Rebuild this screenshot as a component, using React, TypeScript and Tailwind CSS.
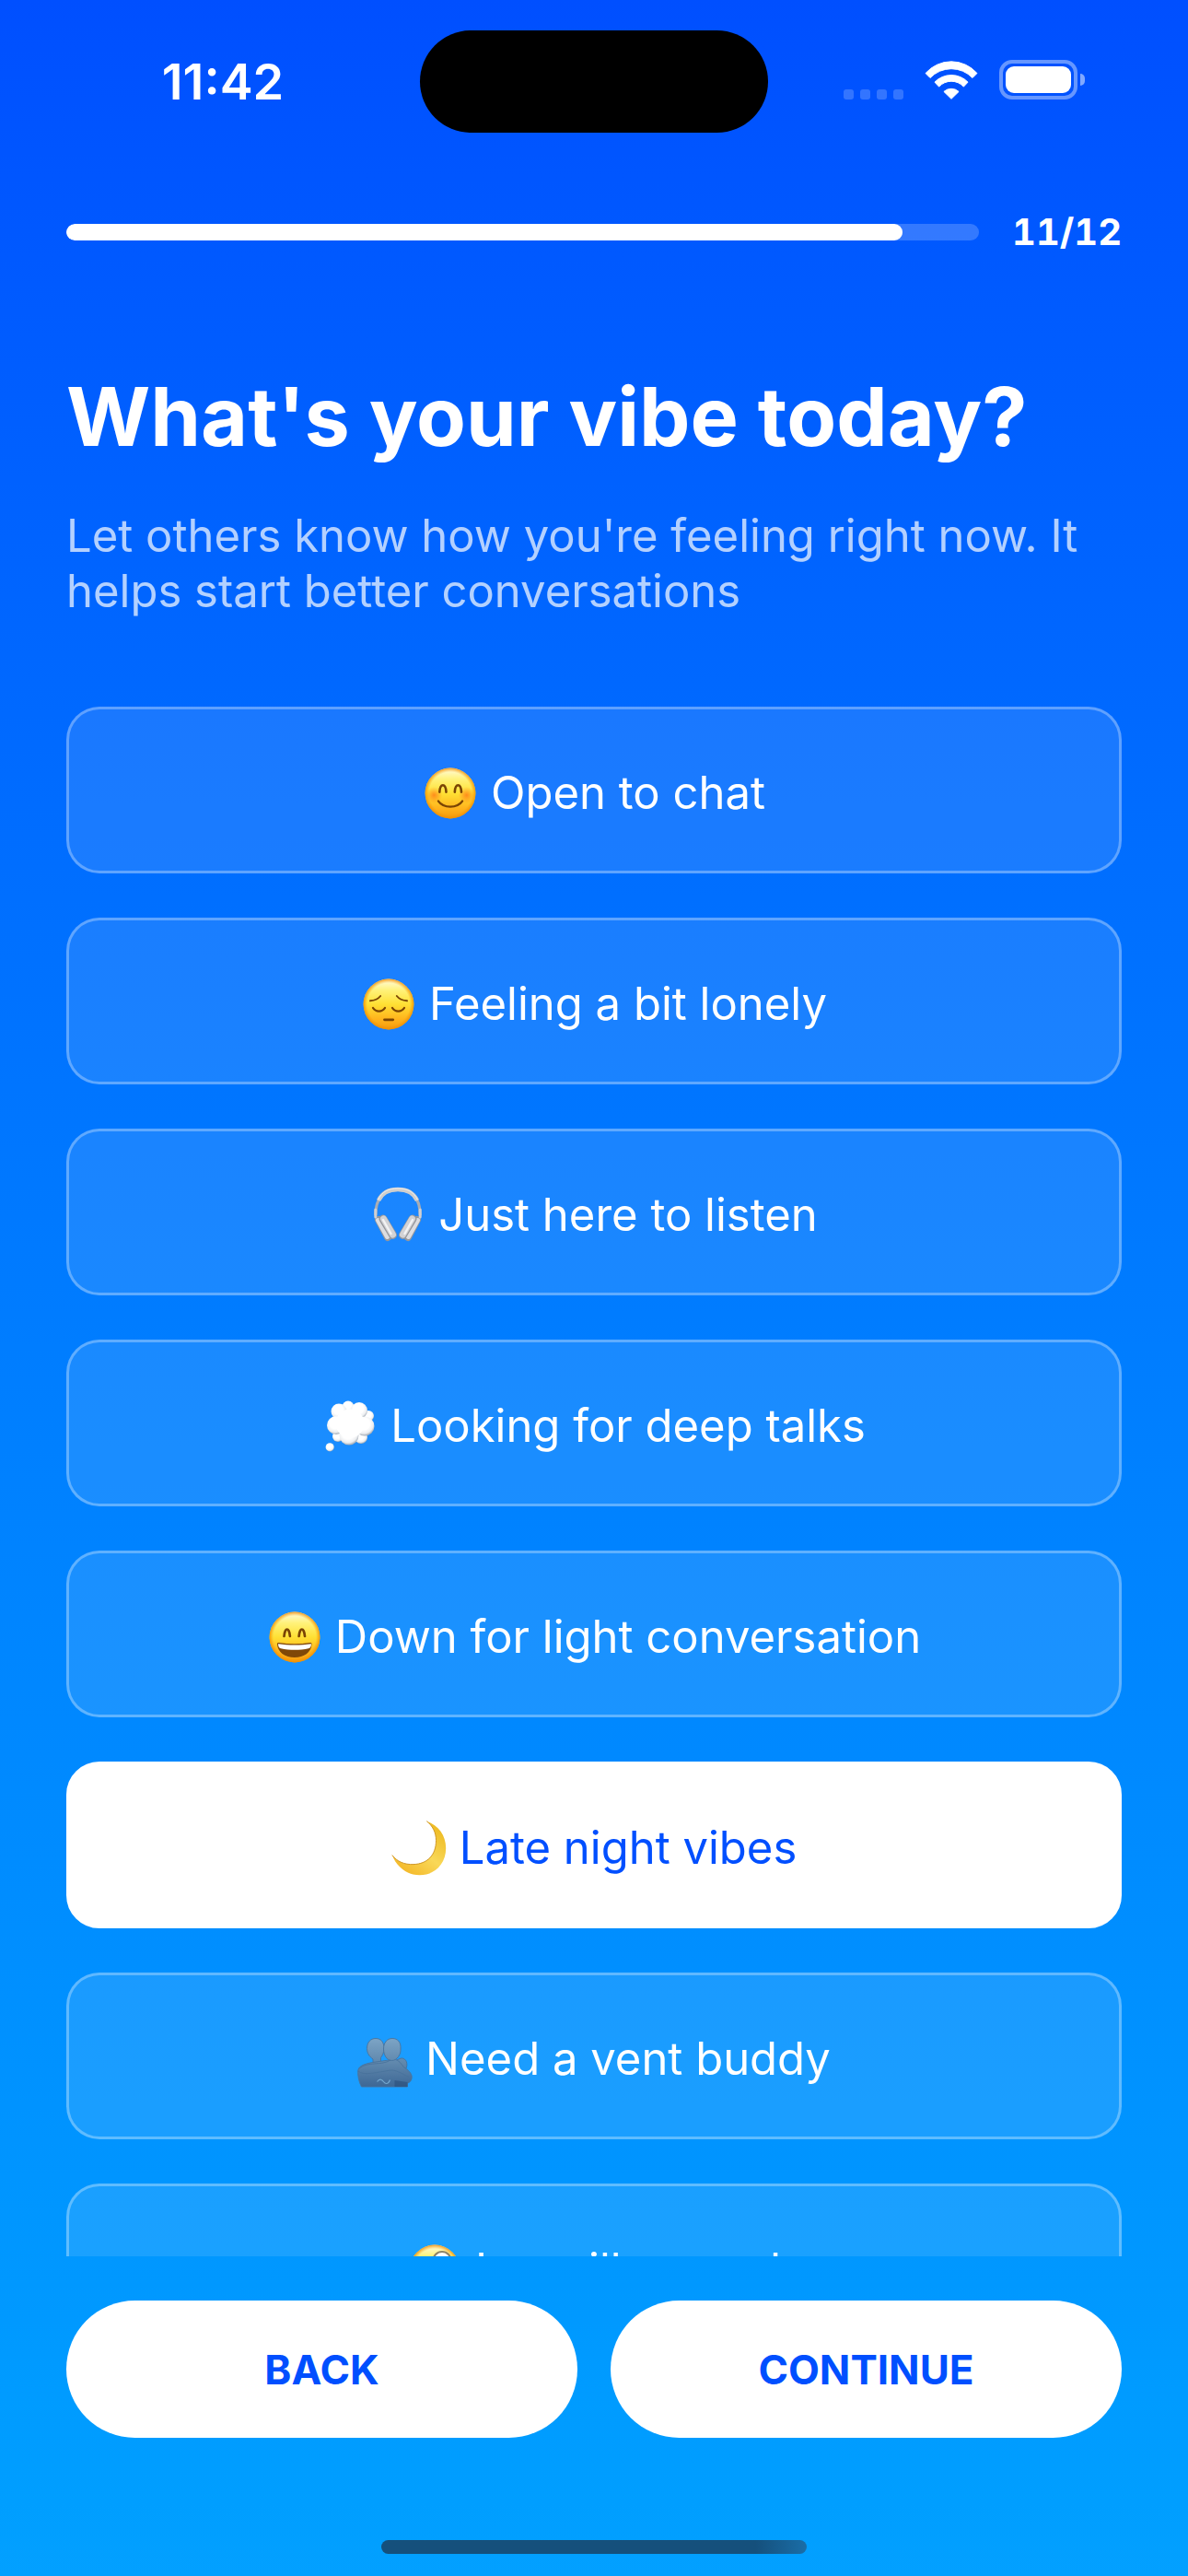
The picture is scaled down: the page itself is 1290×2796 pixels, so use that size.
import { useState, type ReactNode } from "react";

function Face({ children }: { children: ReactNode }) {
  return (
    <>
      <defs>
        <linearGradient id="face-fill" x1="0" y1="0" x2="0" y2="1">
          <stop offset="0" stopColor="#fffbe0" />
          <stop offset="0.22" stopColor="#fff27a" />
          <stop offset="0.5" stopColor="#ffe034" />
          <stop offset="0.8" stopColor="#ffb31c" />
          <stop offset="1" stopColor="#f59a0c" />
        </linearGradient>
        <radialGradient id="face-rim" cx="0.5" cy="0.5" r="0.5">
          <stop offset="0.84" stopColor="#f59a0c" stopOpacity="0" />
          <stop offset="1" stopColor="#ef8c00" stopOpacity="0.85" />
        </radialGradient>
      </defs>
      <circle cx="30" cy="30" r="27.4" fill="url(#face-fill)" />
      <circle cx="30" cy="30" r="27.4" fill="url(#face-rim)" />
      {children}
    </>
  );
}

function Smile() {
  return (
    <Face>
      <defs>
        <radialGradient id="blush">
          <stop offset="0" stopColor="#ff6a13" stopOpacity="0.7" />
          <stop offset="1" stopColor="#ff7a13" stopOpacity="0" />
        </radialGradient>
      </defs>
      <circle cx="12.3" cy="32" r="9" fill="url(#blush)" />
      <circle cx="47.7" cy="32" r="9" fill="url(#blush)" />
      <g fill="none" stroke="#7a4404" strokeLinecap="round">
        <path d="M18.3 28.6c.6-9.8 6.6-9.8 7.2 0M34.8 28.6c.6-9.8 6.6-9.8 7.2 0" strokeWidth="2.6" />
        <path d="M17 38.6c5.6 8 20.4 8 26 0" strokeWidth="2.4" />
      </g>
    </Face>
  );
}

function Pensive() {
  return (
    <Face>
      <g fill="none" stroke="#7a4404" strokeLinecap="round">
        <path d="M10 26.3c5-.4 8.6-2 11.2-5.3M50 26.3c-5-.4-8.6-2-11.2-5.3" strokeWidth="1.9" />
        <path d="M13 34c3 4.8 10 4.8 13 0M34 34c3 4.8 10 4.8 13 0" strokeWidth="2.3" />
        <path d="M25.5 46.8h9.2" strokeWidth="2.8" />
      </g>
    </Face>
  );
}

function Headphones() {
  return (
    <>
      <path d="M5.8 30C5.8 11 15 2.5 30 2.5S54.2 11 54.2 30" fill="none" stroke="#a9adb4" strokeWidth="3.2" />
      <path d="M9 14C13 5.5 20 2 30 2s17 3.5 21 12" fill="none" stroke="#cfcecd" strokeWidth="4.4" />
      <path d="M8.5 13.5C13 4 20 .9 30 .9s17 3.1 21.5 12.6" fill="none" stroke="#efeeed" strokeWidth="1" />
      <g strokeLinecap="round" fill="none">
        <path d="M9 35l10 19M51 35L41 54" stroke="#96989d" strokeWidth="8" />
        <path d="M8.5 35.5l10 18M51.5 35.5l-10 18" stroke="#dddde0" strokeWidth="5" />
      </g>
      <g strokeLinecap="round" fill="none">
        <path d="M14 34l10.500 17.500M46 34L35.500 51.500" stroke="#96989d" strokeWidth="9" />
        <path d="M14.500 34l10 17M45.500 34l-10 17" stroke="#d2d2d5" strokeWidth="7" />
        <path d="M14 35l8.500 15M46 35l-8.500 15" stroke="#f3f3f4" strokeWidth="2.4" />
      </g>
      <path d="M5.8 24v8M54.2 24v8" stroke="#d0d0d3" strokeWidth="3" strokeLinecap="round" />
    </>
  );
}

function Thought() {
  return (
    <>
      <defs>
        <radialGradient id="puff" cx="0.45" cy="0.38" r="0.62">
          <stop offset="0.5" stopColor="#ffffff" />
          <stop offset="0.8" stopColor="#eceef0" />
          <stop offset="1" stopColor="#9fa8b3" />
        </radialGradient>
      </defs>
      <g fill="url(#puff)">
        <circle cx="28" cy="9" r="6.5" />
        <circle cx="50" cy="19" r="6" />
        <circle cx="18" cy="14" r="8.5" />
        <circle cx="40" cy="13" r="9" />
        <circle cx="17" cy="41" r="6" />
        <circle cx="42" cy="42" r="7" />
        <circle cx="15" cy="29" r="10" />
        <circle cx="46" cy="30" r="10.5" />
        <circle cx="29" cy="40" r="10.5" />
        <circle cx="8.2" cy="52.8" r="4.6" />
      </g>
      <circle cx="30" cy="27" r="15.5" fill="#fff" />
    </>
  );
}

function Grin() {
  return (
    <Face>
      <path
        d="M18.5 29c.8-10 5.6-10 6.4 0M34.6 29c.8-10 5.6-10 6.4 0"
        fill="none"
        stroke="#7a4404"
        strokeWidth="2.7"
        strokeLinecap="round"
      />
      <path
        d="M11 37.5c0-1.300.8-1.700 2-1.500 11 1.600 22.500 1.600 33.500 0 1.300-.2 2 .3 2 1.500C48 46.500 40 52 29.800 52S11.500 46.500 11 37.500z"
        fill="#804808"
      />
      <path d="M12 37.2c11.500 1.800 24.500 1.800 36 0-.2 3.500-1.300 4.600-3 5-9.500 2-20.500 2-30 0-1.700-.4-2.800-1.500-3-5z" fill="#fff" />
    </Face>
  );
}

function Moon() {
  return (
    <>
      <defs>
        <linearGradient id="moon" x1="0.9" y1="0.2" x2="0.3" y2="1">
          <stop offset="0" stopColor="#efbe28" />
          <stop offset="0.5" stopColor="#f9d858" />
          <stop offset="1" stopColor="#f4b92a" />
        </linearGradient>
      </defs>
      <path
        d="M38.3.7C51 5 59.2 16 59.2 30c0 17-12 29.300-28.500 29.300C17 59.300 5.500 50 .8 37.500 6 44.500 14 48 24 47.600c15-.5 24.500-10 24.500-26 0-9-4-16-10.200-20.900z"
        fill="url(#moon)"
      />
      <path
        d="M.8 37.500C6 44.500 14 48 24 47.600c15-.5 24.500-10 24.500-26 0-9-4-16-10.200-20.900"
        fill="none"
        stroke="#c98f1c"
        strokeWidth="0.9"
      />
    </>
  );
}

function Hug() {
  return (
    <>
      <defs>
        <linearGradient id="hug" x1="0" y1="7" x2="0" y2="60" gradientUnits="userSpaceOnUse">
          <stop offset="0" stopColor="#7da5c6" />
          <stop offset="0.5" stopColor="#6088ad" />
          <stop offset="1" stopColor="#3d6795" />
        </linearGradient>
      </defs>
      <g fill="url(#hug)" stroke="#48739c" strokeWidth="0.9" strokeLinejoin="round">
        <path d="M10.500 18.500c0-7 4-11 9.500-11s9 4 9 10.500c0 5-1.800 8-3.500 10.500V38H17v-8c-4-3-6.500-6.500-6.500-11.500z" />
        <path d="M47.500 29c6-.5 8 7 5 12l-8-1-2-9z" />
        <path d="M4.500 60c-3-5.500-4-12-3.800-17 .4-5 5-7.500 16-9.500l21-3c6-1 9 3 12.500 8 5 3 9 7 9 11 0 3.500-2.200 6-4.700 6.500V60z" />
        <path d="M28.500 19c0-7 4-11.500 9.500-11.500 5.700 0 9 4 9 9.500v3.500c0 4.500-4 11-9.500 11s-9-6-9-12.500z" />
        <path d="M1 43c5 5.500 22 1 34-.8 7-1 12 3 21 7.200M2 40c10-8 24-2.500 34-9" fill="none" />
      </g>
      <path d="M40.500 53l14 2v5h-14z" fill="#2f5480" fillOpacity="0.75" />
      <path d="M21.500 54.500c3-4 5.500-2 7 0s4.500 4 7-2" fill="none" stroke="#76a9cf" strokeWidth="1.2" />
    </>
  );
}

function Zany() {
  return (
    <Face>
      <circle cx="38" cy="19.5" r="9.5" fill="#fff" stroke="#8d8368" strokeWidth="2.2" />
      <circle cx="38" cy="18.500" r="3" fill="#3b2a1a" />
      <circle cx="17.5" cy="25.5" r="6.5" fill="#fff" stroke="#8d8368" strokeWidth="1.4" />
      <circle cx="18" cy="25.5" r="2.4" fill="#3b2a1a" />
      <path d="M14 40c11 3 22 0 31-6-1 12-7 18-15 18s-14-5-16-12z" fill="#804808" />
      <path d="M24 46c6-2 10-3 14-6l3 9c1 8-12 9-14 3z" fill="#f0508a" />
    </Face>
  );
}

const vibes = [
  { label: "Open to chat", Icon: Smile },
  { label: "Feeling a bit lonely", Icon: Pensive },
  { label: "Just here to listen", Icon: Headphones },
  { label: "Looking for deep talks", Icon: Thought },
  { label: "Down for light conversation", Icon: Grin },
  { label: "Late night vibes", Icon: Moon },
  { label: "Need a vent buddy", Icon: Hug },
  { label: "In a silly mood", Icon: Zany },
];

function StatusBar() {
  return (
    <div className="grid shrink-0 grid-cols-[1fr_378px_1fr] items-center pt-[33px]">
      <div className="pr-[56px] pl-[84px] text-center text-[54px] leading-[60px] font-semibold">11:42</div>
      <div className="h-[111px] rounded-full bg-black" />
      <div className="-mt-1 flex items-end gap-[23px] pl-[82px]">
        <div className="flex gap-[7px]">
          {[0, 1, 2, 3].map((n) => (
            <span key={n} className="size-[11px] rounded-[3px] bg-white/20" />
          ))}
        </div>
        <svg
          viewBox="0 0 173 127"
          className="h-[42px] w-[58px]"
          fill="#fff"
          stroke="#fff"
          strokeWidth="3"
          strokeLinejoin="round"
          aria-hidden="true"
        >
          <path d="M2 41A112 112 0 0 1 171 41L156 56A96 96 0 0 0 17 56Z" />
          <path d="M32 70A76 76 0 0 1 141 70L127 85A55 55 0 0 0 46 85Z" />
          <path d="M62 101A37 37 0 0 1 111 101L86.500 125Z" />
        </svg>
        <div className="flex items-center gap-[3px]">
          <div className="h-[43px] w-[85px] rounded-[14px] border-4 border-white/40 p-[3px]">
            <div className="h-full rounded-[9px] bg-white" />
          </div>
          <span className="h-[13px] w-[5px] rounded-r-full bg-white/50" />
        </div>
      </div>
    </div>
  );
}

export default function App() {
  const [selected, setSelected] = useState("Late night vibes");
  return (
    <div className="flex h-dvh flex-col bg-linear-to-b from-[#004fff] to-[#03a0ff] font-['Inter',sans-serif] text-white">
      <StatusBar />
      <main className="flex min-h-0 flex-1 flex-col px-[72px]">
        <div className="mt-[78px] flex items-center gap-9">
          <div
            role="progressbar"
            aria-label="Profile progress"
            aria-valuemin={0}
            aria-valuemax={12}
            aria-valuenow={11}
            className="h-[18px] flex-1 overflow-hidden rounded-full bg-white/20"
          >
            <div className="h-full w-11/12 rounded-full bg-white" />
          </div>
          <span className="text-[40px] leading-[60px] font-bold tabular-nums">11/12</span>
        </div>
        <h1 className="mt-[118px] text-[88px] leading-[104px] font-bold">What's your vibe today?</h1>
        <p className="mt-12 text-[49px] leading-[60px] text-white/70">
          Let others know how you're feeling right now. It helps start better conversations
        </p>
        <div className="mt-[95px] flex min-h-0 flex-1 flex-col gap-12 overflow-y-auto [scrollbar-width:none]">
          {vibes.map(({ label, Icon }) => (
            <button
              key={label}
              type="button"
              aria-pressed={selected === label}
              onClick={() => setSelected(label)}
              className={
                "flex h-[181px] shrink-0 items-center justify-center gap-[14px] rounded-[36px] border-[3px] pt-[6px] text-[49px] leading-[60px] " +
                (selected === label ? "border-white bg-white text-[#004fff]" : "border-white/30 bg-white/10")
              }
            >
              <svg viewBox="0 0 60 60" className="size-[60px] overflow-visible" aria-hidden="true">
                <Icon />
              </svg>
              {label}
            </button>
          ))}
        </div>
      </main>
      <footer className="flex shrink-0 flex-col items-center px-[72px] pt-12 pb-6">
        <div className="flex w-full gap-9 text-[44px] leading-[60px] font-bold text-[#004fff]">
          <button type="button" className="h-[149px] flex-1 rounded-full bg-white">
            BACK
          </button>
          <button type="button" className="h-[149px] flex-1 rounded-full bg-white">
            CONTINUE
          </button>
        </div>
        <div className="mt-[111px] h-[15px] w-[462px] rounded-full bg-linear-to-r from-[#15507c] from-88% to-[#1a6ea8]" />
      </footer>
    </div>
  );
}
